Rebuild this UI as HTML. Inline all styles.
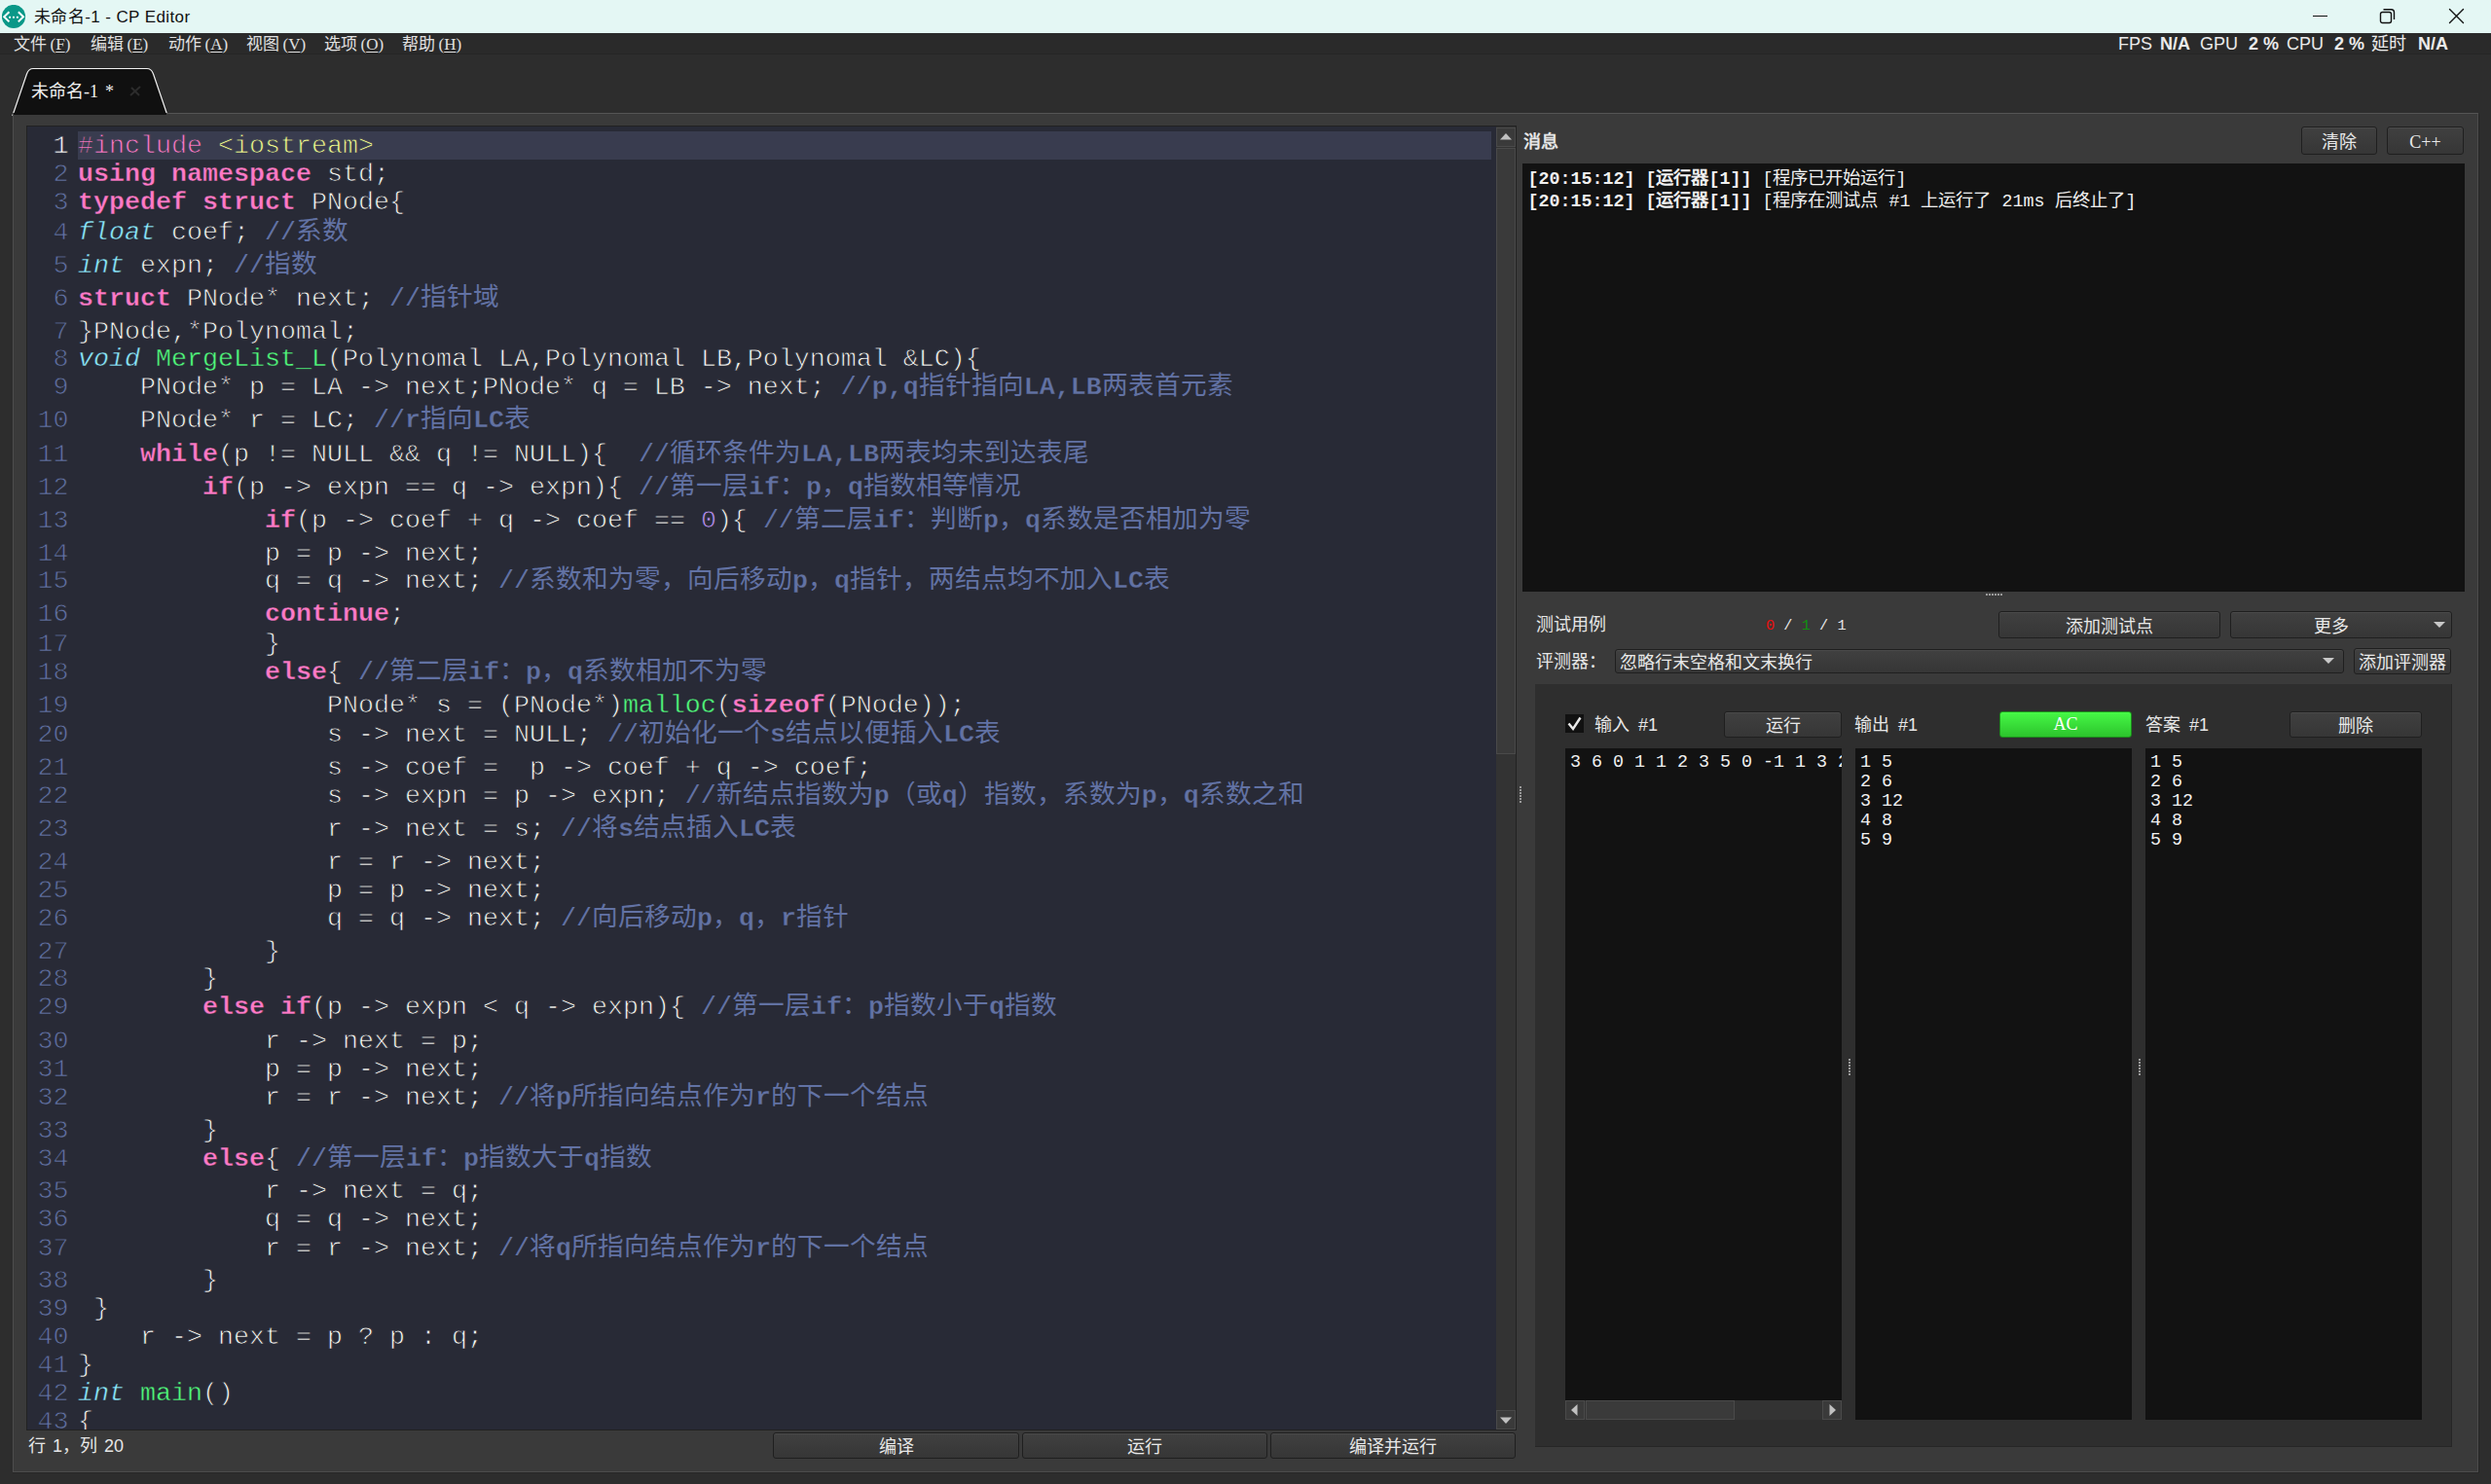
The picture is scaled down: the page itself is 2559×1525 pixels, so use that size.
<!DOCTYPE html>
<html lang="zh-CN"><head><meta charset="utf-8">
<style>
*{margin:0;padding:0;box-sizing:border-box}
html,body{width:2559px;height:1525px;overflow:hidden;background:#2d2d2d;font-family:"Liberation Sans",sans-serif;}
.a{position:absolute}
#title{left:0;top:0;width:2559px;height:34px;background:#e4f7f4}
#menubar{left:0;top:34px;width:2559px;height:22px;background:#2a2a2a;border-bottom:1px solid #262626}
.mi{position:absolute;top:35px;height:22px;line-height:22px;font-size:17px;color:#e0e0e0;white-space:pre;font-family:"Liberation Serif",serif}
.mi u{text-decoration:underline;text-underline-offset:2px}
.fps{position:absolute;top:34px;height:22px;line-height:22px;font-size:18px;color:#eaeaea;white-space:pre}
#pane{left:13px;top:116px;width:2533px;height:397px;}
.ln,.nm{position:absolute;height:30px;line-height:30px;font-family:"Liberation Mono",monospace;font-size:26.67px;white-space:pre;color:#f8f8f2;-webkit-text-stroke:0.75px #282a36}
.ln.cl,.nm.cur{-webkit-text-stroke-color:#393c4f}
.kw{-webkit-text-stroke-width:0.35px}
.ln{left:52px}
.nm{left:0;width:42.5px;text-align:right;color:#6272a4}
.nm.cur{color:#f8f8f2}
.kw{color:#ff79c6;font-weight:bold}
.pp{color:#ff79c6}
.st{color:#f1fa8c}
.ty{color:#8be9fd;font-style:italic;-webkit-text-stroke-width:0.45px}
.fn{color:#50fa7b;-webkit-text-stroke-width:0.4px}
.nu{color:#bd93f9}
.cm{color:#6272a4;-webkit-text-stroke-width:0}
.cm b{-webkit-text-stroke-width:0.3px}
.btn{position:absolute;background:linear-gradient(#404040,#363636);border:1px solid #1f1f1f;border-radius:3px;box-shadow:inset 0 1px 0 #4a4a4a;color:#e8e8e8;font-size:18px;text-align:center;white-space:pre;padding-top:1.5px}
.lbl{position:absolute;color:#e6e6e6;font-size:18px;white-space:pre;line-height:22px;height:22px}
.mono{font-family:"Liberation Mono",monospace}
.txt{position:absolute;background:#121212}
.tcl{position:absolute;font-family:"Liberation Mono",monospace;font-size:18.33px;line-height:20px;color:#f0f0f0;white-space:pre}
.dots{position:absolute;width:2px;background:repeating-linear-gradient(#9a9a9a 0 2px,transparent 2px 3px)}
.hdots{position:absolute;height:2px;background:repeating-linear-gradient(90deg,#9a9a9a 0 2px,transparent 2px 3px)}
</style></head><body>
<!-- title bar -->
<div id="title" class="a">
  <svg class="a" style="left:2px;top:5px" width="25" height="25" viewBox="0 0 25 25">
    <circle cx="12" cy="12" r="12.1" fill="#0a9888"/>
    <path d="M7.4 7.2 L2.2 12.2 L7.4 17.4" fill="none" stroke="#fff" stroke-width="2"/>
    <path d="M16.8 7.2 L22 12.2 L16.8 17.4" fill="none" stroke="#fff" stroke-width="2"/>
    <rect x="7.2" y="11.8" width="1.9" height="1.9" fill="#fff"/><rect x="11" y="11.8" width="1.9" height="1.9" fill="#fff"/><rect x="14.9" y="11.8" width="1.9" height="1.9" fill="#fff"/>
  </svg>
  <div class="a" style="left:35px;top:7.4px;font-size:17px;letter-spacing:0.4px;line-height:22px;color:#111;white-space:pre">未命名-1 - CP Editor</div>
  <div class="a" style="left:2376px;top:16px;width:15px;height:1px;background:#111"></div>
  <svg class="a" style="left:2444px;top:8px" width="18" height="18" viewBox="0 0 18 18"><rect x="1.5" y="4.5" width="11" height="11" rx="2" fill="none" stroke="#111" stroke-width="1.4"/><path d="M4.5 1.7 H12.5 Q15.5 1.7 15.5 4.7 V12" fill="none" stroke="#111" stroke-width="1.4"/></svg>
  <svg class="a" style="left:2514px;top:8px" width="18" height="18" viewBox="0 0 18 18"><path d="M2.5 1.5 L16.5 15.5 M16.5 1.5 L2.5 15.5" stroke="#111" stroke-width="1.4" stroke-linecap="round"/></svg>
</div>
<!-- menu bar -->
<div id="menubar" class="a"></div>
<div class="mi" style="left:14px">文件<span style="margin-left:3.5px">(<u>F</u>)</span></div>
<div class="mi" style="left:93px">编辑<span style="margin-left:3.5px">(<u>E</u>)</span></div>
<div class="mi" style="left:173px">动作<span style="margin-left:3.5px">(<u>A</u>)</span></div>
<div class="mi" style="left:253px">视图<span style="margin-left:3.5px">(<u>V</u>)</span></div>
<div class="mi" style="left:333px">选项<span style="margin-left:3.5px">(<u>O</u>)</span></div>
<div class="mi" style="left:413px">帮助<span style="margin-left:3.5px">(<u>H</u>)</span></div>
<div class="fps" style="left:2176px">FPS</div><div class="fps" style="left:2219px;font-weight:bold">N/A</div><div class="fps" style="left:2260px">GPU</div><div class="fps" style="left:2310px;font-weight:bold">2 %</div><div class="fps" style="left:2349px">CPU</div><div class="fps" style="left:2398px;font-weight:bold">2 %</div><div class="fps" style="left:2436px">延时</div><div class="fps" style="left:2484px;font-weight:bold">N/A</div>

<!-- tab -->
<svg class="a" style="left:0;top:60px" width="200" height="60" viewBox="0 60 200 60">
  <path d="M13 118.5 L27.5 76 Q29.5 70.5 34 70.5 L151 70.5 Q155.5 70.5 157.5 76 L172 118.5 Z" fill="#101010" stroke="#f0f0f0" stroke-width="1.2"/>
</svg>
<div class="a" style="left:32px;top:82.5px;font-size:18px;line-height:22px;color:#f0f0f0;white-space:pre;font-family:'Liberation Serif',serif">未命名-1<span style="margin-left:7px">*</span></div>
<svg class="a" style="left:131px;top:86px" width="16" height="16"><path d="M3 12 L13 3 M4 4 L12 12" stroke="#2c2c2c" stroke-width="2"/></svg>

<!-- pane -->
<div class="a" style="left:13px;top:116px;width:2533px;height:1397px;background:#3a3a3a;border:1px solid #4d4d4d;border-top-color:#555"></div>
<div class="a" style="left:13px;top:1513px;width:2534px;height:1px;background:#262626"></div>
<div class="a" style="left:2546px;top:117px;width:1px;height:1397px;background:#262626"></div>
<!-- redraw tab bottom join -->
<div class="a" style="left:14px;top:116px;width:157px;height:2px;background:#101010"></div>

<!-- editor -->
<div class="a" style="left:27px;top:129px;width:1531px;height:1341px;background:#222;"></div>
<div class="a" id="editor" style="left:28px;top:130px;width:1509px;height:1339px;background:#282a36;overflow:hidden">
  <div class="a" style="left:52px;top:5px;width:1452px;height:29px;background:#393c4f"></div>
<div class="nm cur" style="top:4.9px">1</div>
<div class="nm" style="top:34.0px">2</div>
<div class="nm" style="top:62.9px">3</div>
<div class="nm" style="top:94.2px">4</div>
<div class="nm" style="top:127.6px">5</div>
<div class="nm" style="top:162.0px">6</div>
<div class="nm" style="top:196.3px">7</div>
<div class="nm" style="top:224.2px">8</div>
<div class="nm" style="top:253.4px">9</div>
<div class="nm" style="top:287.4px">10</div>
<div class="nm" style="top:321.8px">11</div>
<div class="nm" style="top:355.7px">12</div>
<div class="nm" style="top:389.5px">13</div>
<div class="nm" style="top:423.9px">14</div>
<div class="nm" style="top:452.2px">15</div>
<div class="nm" style="top:486.1px">16</div>
<div class="nm" style="top:516.5px">17</div>
<div class="nm" style="top:545.9px">18</div>
<div class="nm" style="top:579.7px">19</div>
<div class="nm" style="top:610.0px">20</div>
<div class="nm" style="top:643.7px">21</div>
<div class="nm" style="top:673.3px">22</div>
<div class="nm" style="top:707.0px">23</div>
<div class="nm" style="top:741.4px">24</div>
<div class="nm" style="top:770.1px">25</div>
<div class="nm" style="top:798.9px">26</div>
<div class="nm" style="top:832.5px">27</div>
<div class="nm" style="top:861.4px">28</div>
<div class="nm" style="top:890.1px">29</div>
<div class="nm" style="top:924.5px">30</div>
<div class="nm" style="top:953.8px">31</div>
<div class="nm" style="top:983.1px">32</div>
<div class="nm" style="top:1016.8px">33</div>
<div class="nm" style="top:1045.7px">34</div>
<div class="nm" style="top:1079.4px">35</div>
<div class="nm" style="top:1108.4px">36</div>
<div class="nm" style="top:1137.5px">37</div>
<div class="nm" style="top:1171.4px">38</div>
<div class="nm" style="top:1200.3px">39</div>
<div class="nm" style="top:1229.4px">40</div>
<div class="nm" style="top:1258.3px">41</div>
<div class="nm" style="top:1287.2px">42</div>
<div class="nm" style="top:1316.0px">43</div>
<div class="ln cl" style="top:4.9px"><span class="pp">#include</span> <span class="st">&lt;iostream&gt;</span></div>
<div class="ln" style="top:34.0px"><span class="kw">using</span> <span class="kw">namespace</span> std;</div>
<div class="ln" style="top:62.9px"><span class="kw">typedef</span> <span class="kw">struct</span> PNode{</div>
<div class="ln" style="top:94.2px"><span class="ty">float</span> coef; <span class="cm">//系数</span></div>
<div class="ln" style="top:127.6px"><span class="ty">int</span> expn; <span class="cm">//指数</span></div>
<div class="ln" style="top:162.0px"><span class="kw">struct</span> PNode* next; <span class="cm">//指针域</span></div>
<div class="ln" style="top:196.3px">}PNode,*Polynomal;</div>
<div class="ln" style="top:224.2px"><span class="ty">void</span> <span class="fn">MergeList_L</span>(Polynomal LA,Polynomal LB,Polynomal &amp;LC){</div>
<div class="ln" style="top:253.4px">    PNode* p = LA -&gt; next;PNode* q = LB -&gt; next; <span class="cm">//<b>p,q</b>指针指向<b>LA,LB</b>两表首元素</span></div>
<div class="ln" style="top:287.4px">    PNode* r = LC; <span class="cm">//<b>r</b>指向<b>LC</b>表</span></div>
<div class="ln" style="top:321.8px">    <span class="kw">while</span>(p != NULL &amp;&amp; q != NULL){  <span class="cm">//循环条件为<b>LA,LB</b>两表均未到达表尾</span></div>
<div class="ln" style="top:355.7px">        <span class="kw">if</span>(p -&gt; expn == q -&gt; expn){ <span class="cm">//第一层<b>if</b>：<b>p</b>，<b>q</b>指数相等情况</span></div>
<div class="ln" style="top:389.5px">            <span class="kw">if</span>(p -&gt; coef + q -&gt; coef == <span class="nu">0</span>){ <span class="cm">//第二层<b>if</b>：判断<b>p</b>，<b>q</b>系数是否相加为零</span></div>
<div class="ln" style="top:423.9px">            p = p -&gt; next;</div>
<div class="ln" style="top:452.2px">            q = q -&gt; next; <span class="cm">//系数和为零，向后移动<b>p</b>，<b>q</b>指针，两结点均不加入<b>LC</b>表</span></div>
<div class="ln" style="top:486.1px">            <span class="kw">continue</span>;</div>
<div class="ln" style="top:516.5px">            }</div>
<div class="ln" style="top:545.9px">            <span class="kw">else</span>{ <span class="cm">//第二层<b>if</b>：<b>p</b>，<b>q</b>系数相加不为零</span></div>
<div class="ln" style="top:579.7px">                PNode* s = (PNode*)<span class="fn">malloc</span>(<span class="kw">sizeof</span>(PNode));</div>
<div class="ln" style="top:610.0px">                s -&gt; next = NULL; <span class="cm">//初始化一个<b>s</b>结点以便插入<b>LC</b>表</span></div>
<div class="ln" style="top:643.7px">                s -&gt; coef =  p -&gt; coef + q -&gt; coef;</div>
<div class="ln" style="top:673.3px">                s -&gt; expn = p -&gt; expn; <span class="cm">//新结点指数为<b>p</b>（或<b>q</b>）指数，系数为<b>p</b>，<b>q</b>系数之和</span></div>
<div class="ln" style="top:707.0px">                r -&gt; next = s; <span class="cm">//将<b>s</b>结点插入<b>LC</b>表</span></div>
<div class="ln" style="top:741.4px">                r = r -&gt; next;</div>
<div class="ln" style="top:770.1px">                p = p -&gt; next;</div>
<div class="ln" style="top:798.9px">                q = q -&gt; next; <span class="cm">//向后移动<b>p</b>，<b>q</b>，<b>r</b>指针</span></div>
<div class="ln" style="top:832.5px">            }</div>
<div class="ln" style="top:861.4px">        }</div>
<div class="ln" style="top:890.1px">        <span class="kw">else</span> <span class="kw">if</span>(p -&gt; expn &lt; q -&gt; expn){ <span class="cm">//第一层<b>if</b>：<b>p</b>指数小于<b>q</b>指数</span></div>
<div class="ln" style="top:924.5px">            r -&gt; next = p;</div>
<div class="ln" style="top:953.8px">            p = p -&gt; next;</div>
<div class="ln" style="top:983.1px">            r = r -&gt; next; <span class="cm">//将<b>p</b>所指向结点作为<b>r</b>的下一个结点</span></div>
<div class="ln" style="top:1016.8px">        }</div>
<div class="ln" style="top:1045.7px">        <span class="kw">else</span>{ <span class="cm">//第一层<b>if</b>：<b>p</b>指数大于<b>q</b>指数</span></div>
<div class="ln" style="top:1079.4px">            r -&gt; next = q;</div>
<div class="ln" style="top:1108.4px">            q = q -&gt; next;</div>
<div class="ln" style="top:1137.5px">            r = r -&gt; next; <span class="cm">//将<b>q</b>所指向结点作为<b>r</b>的下一个结点</span></div>
<div class="ln" style="top:1171.4px">        }</div>
<div class="ln" style="top:1200.3px"> }</div>
<div class="ln" style="top:1229.4px">    r -&gt; next = p ? p : q;</div>
<div class="ln" style="top:1258.3px">}</div>
<div class="ln" style="top:1287.2px"><span class="ty">int</span> <span class="fn">main</span>()</div>
<div class="ln" style="top:1316.0px">{</div>
</div>
<!-- v scrollbar -->
<div class="a" style="left:1537px;top:130px;width:20px;height:1339px;background:#333"></div>
<div class="a" style="left:1537px;top:131px;width:20px;height:20px;background:#3a3a3a;border:1px solid #4a4a4a"></div>
<svg class="a" style="left:1537px;top:131px" width="20" height="20"><path d="M4 12.5 L10 6 L16 12.5 Z" fill="#c0c0c0"/></svg>
<div class="a" style="left:1537px;top:152px;width:20px;height:623px;background:#3a3a3a;border:1px solid #4a4a4a"></div>
<div class="a" style="left:1537px;top:1449px;width:20px;height:20px;background:#3a3a3a;border:1px solid #4a4a4a"></div>
<svg class="a" style="left:1537px;top:1449px" width="20" height="20"><path d="M4 7.5 L10 14 L16 7.5 Z" fill="#c0c0c0"/></svg>

<!-- status -->
<div class="lbl" style="left:29px;top:1475px;word-spacing:2px">行 1，列 20</div>
<div class="btn" style="left:794px;top:1472px;width:253px;height:27px;line-height:25px">编译</div>
<div class="btn" style="left:1050px;top:1472px;width:252px;height:27px;line-height:25px">运行</div>
<div class="btn" style="left:1305px;top:1472px;width:252px;height:27px;line-height:25px">编译并运行</div>

<!-- splitter handle left -->
<div class="dots" style="left:1561px;top:808px;height:17px"></div>

<!-- right panel: messages -->
<div class="lbl" style="left:1565px;top:134.5px;font-weight:bold">消息</div>
<div class="btn" style="left:2364px;top:130px;width:78px;height:29px;line-height:27px">清除</div>
<div class="btn" style="left:2452px;top:130px;width:79px;height:29px;line-height:27px;font-family:'Liberation Serif',serif">C++</div>
<div class="txt" style="left:1564px;top:168px;width:968px;height:440px"></div>
<div class="a mono" style="left:1569.5px;top:172.5px;font-size:18.33px;line-height:23px;color:#f0f0f0;white-space:pre"><b>[20:15:12] [运行器[1]]</b> [程序已开始运行]
<b>[20:15:12] [运行器[1]]</b> [程序在测试点 #1 上运行了 21ms 后终止了]</div>
<div class="hdots" style="left:2040px;top:610px;width:18px"></div>

<!-- testcases header -->
<div class="lbl" style="left:1578px;top:631px">测试用例</div>
<div class="lbl mono" style="left:1814px;top:632px;font-size:15.3px"><span style="color:#e81010">0</span> / <span style="color:#109010">1</span> / 1</div>
<div class="btn" style="left:2053px;top:628px;width:228px;height:28px;line-height:26px">添加测试点</div>
<div class="btn" style="left:2291px;top:628px;width:228px;height:28px;line-height:26px;padding-right:20px">更多</div>
<svg class="a" style="left:2498px;top:636px" width="16" height="12"><path d="M2 3 L14 3 L8 9 Z" fill="#c8c8c8"/></svg>
<div class="lbl" style="left:1578px;top:669px">评测器：</div>
<div class="btn" style="left:1659px;top:667px;width:749px;height:25px;line-height:23px;text-align:left;padding-left:4px">忽略行末空格和文末换行</div>
<svg class="a" style="left:2384px;top:673px" width="16" height="12"><path d="M2 3 L14 3 L8 9 Z" fill="#c8c8c8"/></svg>
<div class="btn" style="left:2418px;top:666px;width:100px;height:27px;line-height:25px">添加评测器</div>

<!-- testcase container -->
<div class="a" style="left:1577px;top:703px;width:942px;height:784px;background:#2e2e2e;border-bottom:1px solid #262626;border-right:1px solid #262626"></div>
<div class="a" style="left:1608px;top:734px;width:19px;height:19px;background:#111"></div>
<svg class="a" style="left:1608px;top:734px" width="19" height="19"><path d="M3.5 9.5 L8 15 L15.5 3.5" fill="none" stroke="#e8e8e8" stroke-width="2.4"/></svg>
<div class="lbl" style="left:1638px;top:734px">输入<span style="margin-left:4px"> #1</span></div>
<div class="btn" style="left:1771px;top:731px;width:121px;height:27px;line-height:25px">运行</div>
<div class="lbl" style="left:1905px;top:734px">输出<span style="margin-left:4px"> #1</span></div>
<div class="a" style="left:2054px;top:731px;width:136px;height:27px;background:linear-gradient(#46f846,#2cc42c);border:1px solid #1c8c1c;border-radius:3px;color:#fff;font-size:18px;line-height:25px;text-align:center;font-family:'Liberation Serif',serif">AC</div>
<div class="lbl" style="left:2204px;top:734px">答案<span style="margin-left:4px"> #1</span></div>
<div class="btn" style="left:2352px;top:731px;width:136px;height:27px;line-height:25px">删除</div>

<div class="txt" style="left:1608px;top:769px;width:284px;height:670px"></div>
<div class="tcl" style="left:1613px;top:774px;width:279px;overflow:hidden">3 6 0 1 1 2 3 5 0 -1 1 3 2</div>
<div class="a" style="left:1608px;top:1439px;width:284px;height:20px;background:#333"></div>
<div class="a" style="left:1608px;top:1439px;width:20px;height:20px;background:#3a3a3a;border:1px solid #4a4a4a"></div>
<svg class="a" style="left:1608px;top:1439px" width="20" height="20"><path d="M12.5 4 L6 10 L12.5 16 Z" fill="#c0c0c0"/></svg>
<div class="a" style="left:1629px;top:1439px;width:153px;height:20px;background:#3a3a3a;border:1px solid #4a4a4a"></div>
<div class="a" style="left:1872px;top:1439px;width:20px;height:20px;background:#3a3a3a;border:1px solid #4a4a4a"></div>
<svg class="a" style="left:1872px;top:1439px" width="20" height="20"><path d="M7.5 4 L14 10 L7.5 16 Z" fill="#c0c0c0"/></svg>

<div class="txt" style="left:1906px;top:769px;width:284px;height:690px"></div>
<div class="tcl" style="left:1911px;top:774px">1 5
2 6
3 12
4 8
5 9</div>
<div class="txt" style="left:2204px;top:769px;width:284px;height:690px"></div>
<div class="tcl" style="left:2209px;top:774px">1 5
2 6
3 12
4 8
5 9</div>
<div class="dots" style="left:1899px;top:1088px;height:17px"></div>
<div class="dots" style="left:2197px;top:1088px;height:17px"></div>
</body></html>
